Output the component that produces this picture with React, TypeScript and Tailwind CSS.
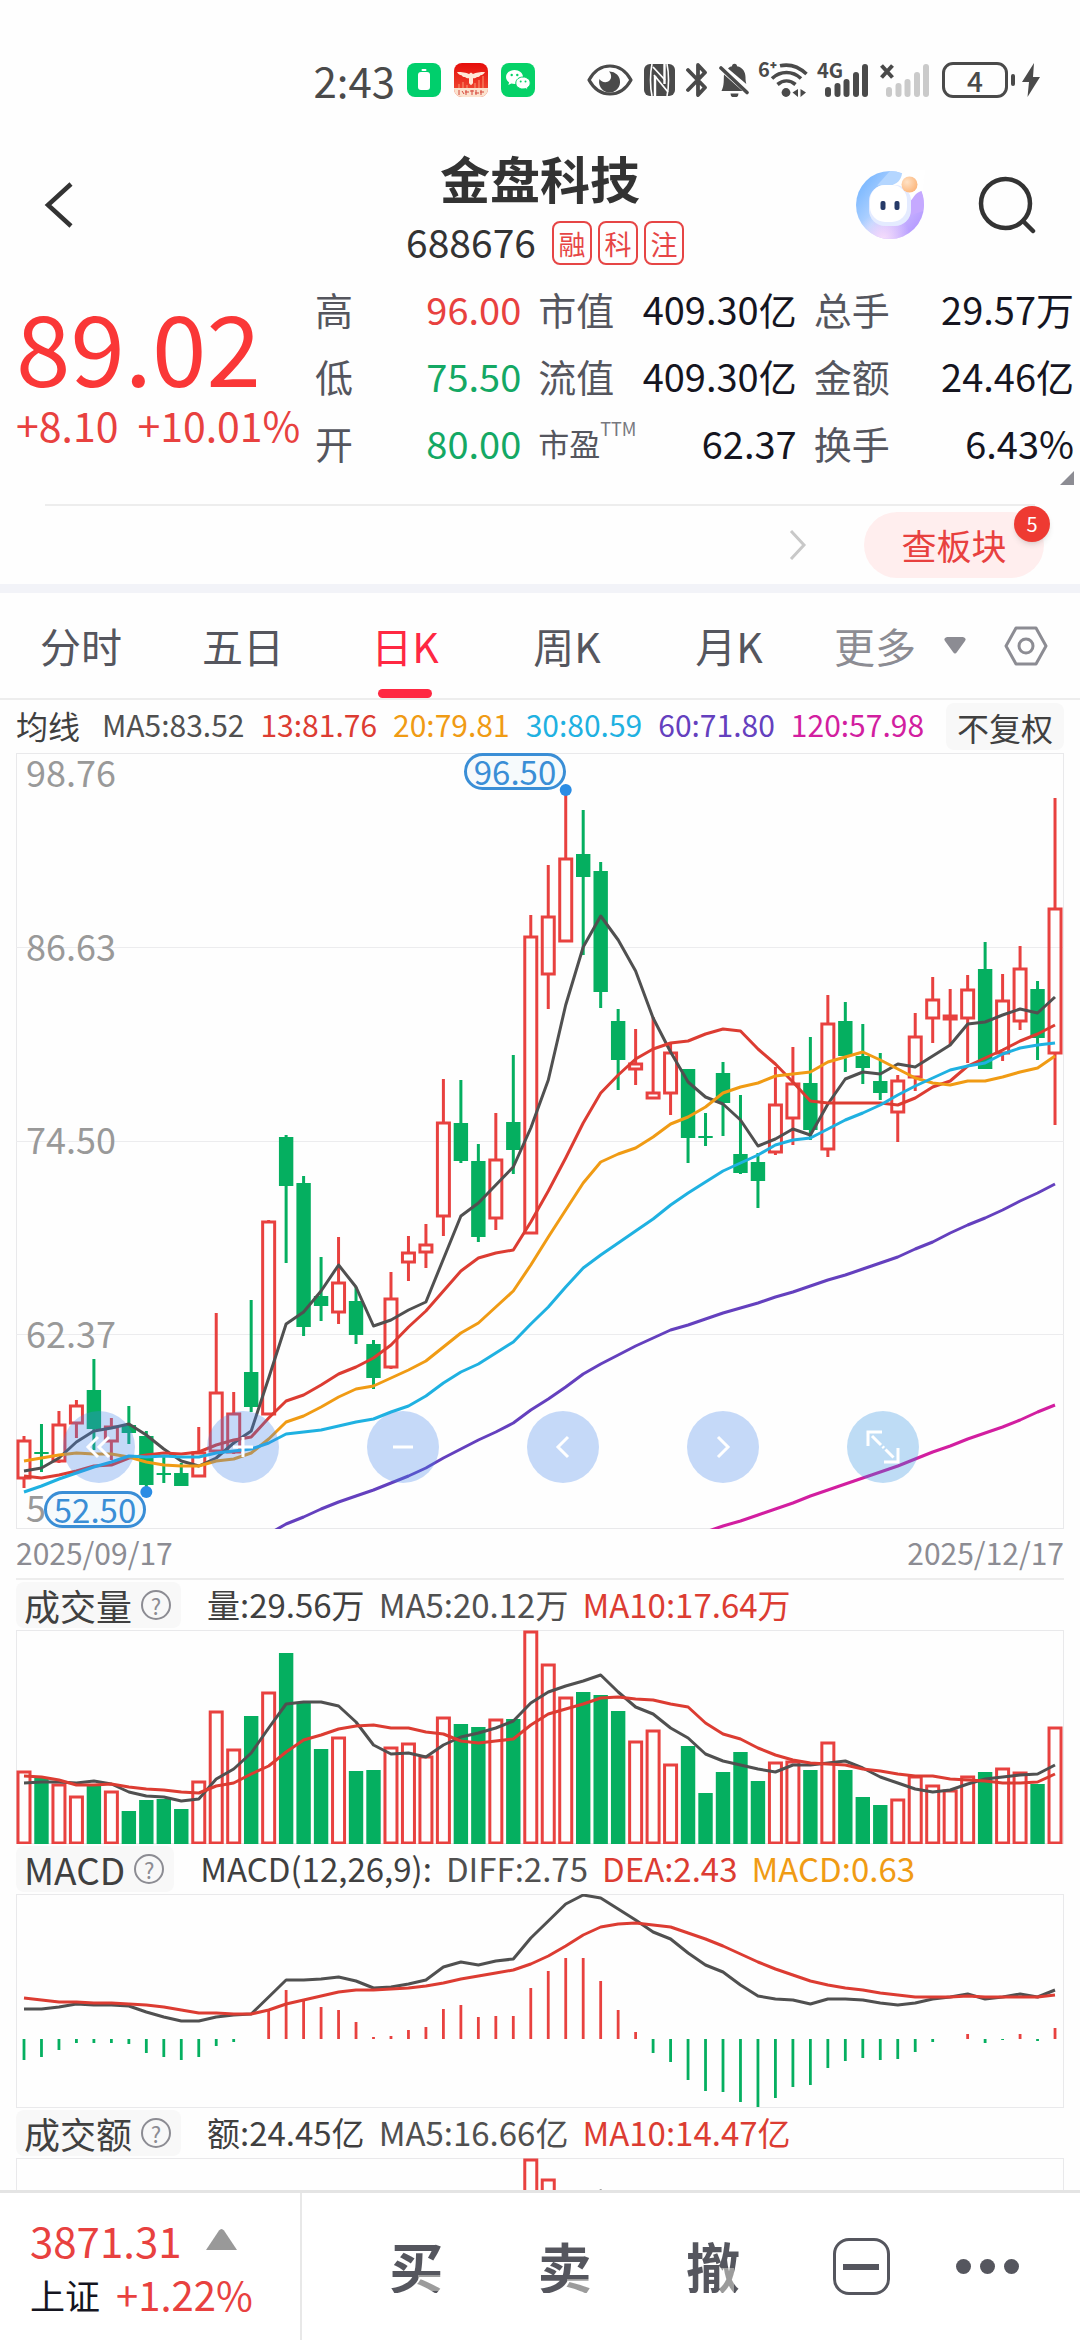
import { useState } from "react";

type Candle = [high: number, top: number, bottom: number, low: number, up: 0 | 1];

// y positions inside the 776px tall price panel
const CANDLES: Candle[] = [
  [683, 687, 726, 735, 1], [671, 699, 701, 719, 0], [658, 671, 709, 710, 1], [647, 652, 671, 685, 1],
  [606, 637, 676, 697, 0], [665, 673, 689, 707, 1], [653, 672, 680, 691, 0], [678, 683, 732, 734, 0],
  [704, 720, 722, 730, 0], [710, 720, 733, 733, 0], [674, 699, 724, 724, 1], [560, 639, 699, 699, 1],
  [639, 660, 700, 701, 1], [547, 619, 654, 659, 0], [467, 468, 662, 662, 1], [382, 384, 433, 510, 0],
  [423, 430, 574, 583, 0], [504, 543, 553, 568, 0], [484, 529, 560, 571, 1], [534, 548, 582, 591, 0],
  [587, 591, 625, 636, 0], [519, 545, 615, 616, 1], [483, 499, 510, 528, 1], [471, 491, 500, 515, 1],
  [326, 369, 464, 483, 1], [327, 370, 408, 410, 0], [391, 408, 484, 489, 0], [360, 406, 466, 477, 1],
  [302, 369, 397, 421, 0], [162, 183, 481, 481, 1], [112, 163, 222, 256, 1], [40, 105, 189, 189, 1],
  [57, 101, 124, 202, 0], [109, 118, 239, 255, 0], [256, 268, 307, 337, 0], [276, 310, 317, 332, 1],
  [264, 339, 346, 346, 1], [291, 299, 341, 362, 1], [316, 316, 385, 410, 0], [360, 383, 385, 393, 0],
  [309, 320, 350, 383, 0], [342, 401, 420, 421, 0], [400, 409, 428, 455, 0], [314, 351, 400, 402, 1],
  [294, 330, 366, 392, 1], [284, 330, 377, 387, 0], [242, 270, 397, 404, 1], [249, 268, 303, 319, 0],
  [271, 303, 315, 331, 0], [300, 328, 340, 347, 0], [322, 327, 360, 389, 1], [260, 283, 325, 338, 1],
  [224, 246, 266, 290, 1], [236, 262, 267, 292, 1], [222, 236, 266, 310, 1], [189, 216, 316, 316, 0],
  [221, 247, 301, 308, 1], [193, 215, 269, 277, 1], [228, 236, 285, 307, 0], [45, 155, 301, 372, 1],
];

const MA5 = [718, 715, 705, 689, 678, 675, 671, 682, 696, 708, 713, 705, 690, 678, 625, 571, 559, 538, 512, 534, 573, 567, 557, 549, 506, 463, 450, 432, 414, 375, 327, 252, 194, 163, 187, 218, 265, 299, 329, 344, 351, 367, 393, 386, 376, 382, 351, 326, 319, 321, 311, 314, 303, 292, 271, 269, 262, 256, 260, 244];
const MA13 = [723, 725, 722, 718, 713, 712, 705, 702, 700, 701, 699, 692, 687, 684, 665, 648, 642, 632, 621, 614, 605, 592, 574, 558, 538, 518, 505, 500, 497, 469, 438, 405, 370, 340, 322, 306, 296, 290, 288, 281, 276, 278, 296, 311, 329, 348, 350, 350, 350, 350, 352, 345, 334, 328, 313, 305, 297, 288, 281, 272];
const MA20 = [708, 705, 702, 700, 701, 701, 704, 709, 712, 713, 713, 708, 706, 700, 686, 669, 663, 654, 644, 636, 633, 625, 617, 608, 594, 580, 570, 554, 538, 512, 484, 457, 430, 409, 401, 395, 384, 371, 364, 354, 340, 334, 330, 323, 321, 319, 309, 304, 299, 307, 316, 325, 330, 332, 328, 328, 324, 319, 315, 303];
const MA30 = [739, 733, 726, 720, 714, 709, 703, 704, 703, 704, 704, 700, 698, 696, 690, 681, 679, 677, 673, 669, 666, 659, 653, 643, 630, 619, 611, 600, 589, 571, 554, 534, 515, 502, 490, 478, 466, 452, 440, 429, 418, 410, 402, 392, 387, 385, 376, 367, 360, 352, 342, 333, 325, 317, 313, 310, 301, 295, 292, 290];
const MA60 = [781, 771, 764, 756, 749, 743, 737, 730, 723, 715, 705, 696, 687, 679, 670, 657, 646, 634, 621, 611, 602, 593, 585, 577, 572, 566, 560, 555, 550, 544, 539, 533, 527, 522, 516, 510, 504, 496, 489, 480, 472, 465, 457, 448, 440, 431];
const MA120 = [779, 773, 768, 762, 756, 750, 743, 737, 731, 725, 719, 713, 706, 699, 693, 686, 680, 674, 667, 659, 652];

const VOLUME = [141, 148, 154, 166, 154, 161, 181, 170, 169, 179, 151, 81, 119, 86, 62, 23, 73, 119, 107, 141, 140, 117, 113, 126, 87, 94, 97, 89, 89, 1, 34, 67, 62, 65, 81, 111, 100, 134, 116, 163, 142, 122, 151, 132, 131, 140, 112, 140, 167, 175, 169, 146, 155, 160, 146, 142, 138, 142, 154, 97];
const VOL_MA5 = [153, 152, 152, 153, 151, 154, 162, 166, 167, 171, 169, 149, 139, 123, 98, 74, 72, 72, 76, 92, 115, 124, 123, 127, 115, 107, 103, 98, 91, 73, 62, 56, 51, 45, 62, 77, 84, 98, 108, 124, 131, 135, 139, 142, 135, 135, 133, 131, 138, 147, 153, 159, 162, 160, 154, 149, 147, 145, 144, 135];
const VOL_MA10 = [146, 147, 150, 155, 155, 154, 157, 159, 160, 162, 163, 156, 153, 144, 136, 122, 110, 105, 99, 96, 95, 98, 98, 102, 104, 111, 113, 111, 109, 95, 84, 79, 74, 68, 67, 69, 70, 74, 77, 93, 104, 109, 118, 125, 130, 133, 134, 135, 139, 141, 144, 146, 146, 149, 150, 151, 153, 153, 152, 144];

const MACD_ZERO = 145;
const MACD_BARS = [166, 163, 156, 149, 149, 149, 150, 159, 163, 166, 163, 152, 148, 145, 117, 96, 106, 113, 116, 128, 143, 142, 136, 133, 115, 111, 123, 122, 122, 94, 77, 64, 64, 87, 116, 138, 159, 168, 186, 197, 198, 208, 213, 204, 193, 191, 174, 167, 164, 166, 165, 158, 148, 145, 140, 149, 146, 140, 147, 134];
const DIFF = [115, 115, 113, 110, 111, 111, 112, 118, 123, 127, 127, 123, 121, 120, 103, 86, 86, 85, 83, 87, 94, 93, 90, 86, 73, 68, 71, 67, 65, 44, 27, 10, 1, 4, 15, 26, 38, 45, 59, 71, 78, 91, 102, 105, 106, 110, 105, 105, 106, 109, 111, 109, 105, 103, 100, 105, 103, 100, 103, 96];
const DEA = [104, 106, 108, 108, 109, 109, 110, 111, 113, 116, 119, 119, 120, 120, 116, 110, 106, 102, 98, 96, 96, 95, 94, 92, 89, 85, 82, 79, 76, 70, 62, 52, 41, 33, 30, 29, 31, 33, 39, 45, 52, 60, 68, 75, 81, 87, 91, 94, 96, 99, 101, 103, 103, 103, 102, 103, 103, 103, 103, 101];

const RED = "#e8413f";
const GREEN = "#05af60";
const GRAY = "#505050";
const DARK_RED = "#dc3c32";

const xAt = (i: number) => 8 + i * 17.475;
const points = (ys: number[], start = 0) => ys.map((y, i) => `${xAt(i + start).toFixed(1)},${y}`).join(" ");

const Line = ({ ys, color, start = 0 }: { ys: number[]; color: string; start?: number }) => (
  <polyline points={points(ys, start)} fill="none" stroke={color} strokeWidth={3} strokeLinejoin="round" />
);

const Frame = ({ height }: { height: number }) => (
  <rect x={0.5} y={0.5} width={1047} height={height - 1} fill="none" stroke="#e9e9eb" />
);

const PriceChart = () => (
  <svg className="block h-[776px] w-full" viewBox="0 0 1048 776" preserveAspectRatio="none">
    <Frame height={776} />
    {[194.5, 388.5, 581.5].map((y) => (
      <line key={y} x1={0} x2={1048} y1={y} y2={y} stroke="#ececee" />
    ))}
    {CANDLES.map(([high, top, bottom, low, up], i) => {
      const x = xAt(i);
      return up ? (
        <g key={i} stroke={RED} strokeWidth={3} fill="none">
          <line x1={x} x2={x} y1={high} y2={top} />
          <rect x={x - 6} y={top + 1} width={12} height={bottom - top - 2} />
          <line x1={x} x2={x} y1={bottom} y2={low} />
        </g>
      ) : (
        <g key={i} fill={GREEN}>
          <rect x={x - 1.5} y={high} width={3} height={low - high} />
          <rect x={x - 7.2} y={top} width={14.4} height={bottom - top} />
        </g>
      );
    })}
    <Line ys={MA5} color={GRAY} />
    <Line ys={MA13} color={DARK_RED} />
    <Line ys={MA20} color="#f09b14" />
    <Line ys={MA30} color="#1fb1e1" />
    <Line ys={MA60} color="#6440be" start={14} />
    <Line ys={MA120} color="#d21ea0" start={39} />
    <circle cx={xAt(31)} cy={37} r={6} fill="#2b8ce4" />
    <circle cx={xAt(7)} cy={739} r={6} fill="#2b8ce4" />
  </svg>
);

const VolumeChart = () => (
  <svg className="block h-[214px] w-full" viewBox="0 0 1048 214" preserveAspectRatio="none">
    <Frame height={214} />
    {VOLUME.map((top, i) =>
      CANDLES[i][4] ? (
        <rect key={i} x={xAt(i) - 6} y={top + 1} width={12} height={212 - top} fill="none" stroke={RED} strokeWidth={3} />
      ) : (
        <rect key={i} x={xAt(i) - 7.2} y={top} width={14.4} height={214 - top} fill={GREEN} />
      )
    )}
    <Line ys={VOL_MA5} color={GRAY} />
    <Line ys={VOL_MA10} color={DARK_RED} />
  </svg>
);

const MacdChart = () => (
  <svg className="block h-[214px] w-full" viewBox="0 0 1048 214" preserveAspectRatio="none">
    <Frame height={214} />
    {MACD_BARS.map((y, i) => (
      <line key={i} x1={xAt(i)} x2={xAt(i)} y1={MACD_ZERO} y2={y} stroke={y < MACD_ZERO ? RED : GREEN} strokeWidth={2.8} />
    ))}
    <Line ys={DIFF} color={GRAY} />
    <Line ys={DEA} color={DARK_RED} />
  </svg>
);

const AmountChart = () => (
  <svg className="block h-[214px] w-full" viewBox="0 0 1048 214" preserveAspectRatio="none">
    <Frame height={214} />
    <rect x={xAt(29) - 6} y={2} width={12} height={211} fill="none" stroke={RED} strokeWidth={3} />
    <rect x={xAt(30) - 6} y={22} width={12} height={191} fill="none" stroke={RED} strokeWidth={3} />
    <line x1={xAt(33) - 1} x2={xAt(33) + 1} y1={32} y2={32} stroke={GRAY} strokeWidth={1} />
  </svg>
);

const BatteryAppIcon = () => (
  <svg className="size-[34px]" viewBox="0 0 34 34">
    <rect width="34" height="34" rx="8" fill="#00cf6c" />
    <rect x="11" y="9" width="12" height="18" rx="3" fill="#fff" />
    <rect x="14.500" y="6" width="5" height="2" rx="1" fill="#fff" />
  </svg>
);

const BrokerAppIcon = () => (
  <svg className="size-[34px]" viewBox="0 0 34 34">
    <defs>
      <linearGradient id="broker" x1="0" y1="0" x2="0" y2="1">
        <stop offset="0" stopColor="#e60d0a" />
        <stop offset="1" stopColor="#f0553a" />
      </linearGradient>
      <clipPath id="brokerClip">
        <rect width="34" height="34" rx="8" />
      </clipPath>
    </defs>
    <g clipPath="url(#brokerClip)">
      <rect width="34" height="34" fill="url(#broker)" />
      <path d="M3 9c5 0 9 .5 12 2l2-1.500 2 1.500c3-1.500 7-2 12-2-1 2-2.500 3-4.500 3.200-.8 1.300-2 1.800-3.500 1.800-1 1-2.500 1.500-4 1.300v5l-2 2-2-2v-5c-1.500.2-3-.3-4-1.300-1.500 0-2.700-.5-3.500-1.800C5.500 12 4 11 3 9z" fill="#ffe9d8" />
      <path d="M5 25v-4M9 25v-6M13 25v-3M21 25v-5M25 25v-8M29 25V13" stroke="#f98a68" strokeWidth="1.200" />
      <rect y="25" width="34" height="9" fill="#fbe3cf" />
      <path d="M5 27v5M8 28l2 3M12 27v5M11 29h4M18 27v5M16 28h4M22 27v5M21 30h4M27 27v5M26 29h4" stroke="#d5463a" strokeWidth="1" />
    </g>
  </svg>
);

const WechatIcon = () => (
  <svg className="size-[34px]" viewBox="0 0 34 34">
    <rect width="34" height="34" rx="8" fill="#05d268" />
    <path d="M13.500 7C8.800 7 5 10.100 5 14c0 2.200 1.200 4.100 3.100 5.400L7.300 22l3-1.500c1 .3 2.100.5 3.200.5 4.700 0 8.500-3.100 8.500-7s-3.800-7-8.500-7z" fill="#fff" />
    <path d="M22 14c-4 0-7.200 2.600-7.200 6s3.200 6 7.200 6c.9 0 1.800-.2 2.600-.4l2.500 1.300-.7-2.200c1.700-1.100 2.800-2.800 2.800-4.700 0-3.400-3.200-6-7.200-6z" fill="#fff" stroke="#05d268" strokeWidth="1" />
    <g fill="#05d268">
      <circle cx="10.700" cy="12" r="1.200" />
      <circle cx="16.300" cy="12" r="1.200" />
      <circle cx="19.700" cy="18.500" r="1" />
      <circle cx="24.500" cy="18.500" r="1" />
    </g>
  </svg>
);

const EyeIcon = () => (
  <svg className="h-8 w-[46px]" viewBox="0 0 46 32" fill="none">
    <path d="M2 16C7 7 14.500 2 23 2s16 5 21 14c-5 9-12.500 14-21 14S7 25 2 16z" stroke="#4a4a4a" strokeWidth="3.200" strokeLinejoin="round" />
    <path d="M22 7.500A10.500 10.500 0 1 1 12.500 15c1.500 3 7 4.500 10 1.500 2.500-2.500 2-6.500-.5-9z" fill="#4a4a4a" />
  </svg>
);

const NfcIcon = () => (
  <svg className="h-8 w-[31px]" viewBox="0 0 31 32">
    <rect width="31" height="32" rx="6" fill="#4a4a4a" />
    <path d="M8 0c-2 9-2 23 0 32" stroke="#fff" strokeWidth="1.600" fill="none" />
    <path d="M23 0c2 9 2 23 0 32" stroke="#fff" strokeWidth="1.600" fill="none" />
    <path d="M11 12v20M20.500 0v20" stroke="#fff" strokeWidth="2.400" />
    <path d="M9 3l12 13M10 11l14 17" stroke="#fff" strokeWidth="1.800" />
  </svg>
);

const BluetoothIcon = () => (
  <svg className="h-[34px] w-[22px]" viewBox="0 0 22 34" fill="none" stroke="#4a4a4a" strokeWidth="3.800" strokeLinejoin="round" strokeLinecap="round">
    <path d="M2 7l17 17.500-7 7.500V2l7 7.500L2 27" />
  </svg>
);

const BellOffIcon = () => (
  <svg className="h-[34px] w-[30px]" viewBox="0 0 30 34" fill="#4a4a4a">
    <path d="M2.500 28h21L5 11.500C4.500 17 5.500 22 2.500 28zM9 5.500c1.500-1.500 3-2 4-2.200a2.500 2.500 0 0 1 5 0c6 1.200 8.500 6 8.500 11 0 2.500.2 4.500.8 6.700z" />
    <path d="M11.500 30.500h8a4 4 0 0 1-8 0z" />
    <path d="M2 5l26 24.500" stroke="#4a4a4a" strokeWidth="3.600" strokeLinecap="round" />
  </svg>
);

const WifiIcon = () => (
  <div className="relative">
    <svg className="h-[36px] w-[48px]" viewBox="0 0 48 36" fill="none" stroke="#4a4a4a" strokeWidth="3.600">
      <path d="M20 3.800C30 1.500 39 5 46.500 12M12 16.500c8.500-8 20.500-8 29 0M17.500 22.500c5.500-4.600 12.500-4.600 18 0" />
      <circle cx="26" cy="30.500" r="4.400" fill="#4a4a4a" stroke="none" />
      <path d="M38 27v8l-5.500-4.500zM40.500 27v8l5.500-4.500z" fill="#4a4a4a" stroke="none" />
    </svg>
    <span className="absolute -top-1 -left-0.5 text-[20px] leading-[22px] font-bold text-[#4a4a4a]">6⁺</span>
  </div>
);

const SignalIcon = ({ label, faded }: { label?: string; faded?: boolean }) => (
  <div className="relative">
    <svg className="h-[36px] w-[50px]" viewBox="0 0 50 36" fill={faded ? "#cacaca" : "#4a4a4a"}>
      <rect x="6" y="25" width="6" height="10" rx="3" />
      <rect x="15.500" y="21" width="6" height="14" rx="3" />
      <rect x="24.500" y="17" width="6" height="18" rx="3" />
      <rect x="34" y="10" width="6" height="25" rx="3" />
      <rect x="43" y="2" width="6" height="33" rx="3" />
      {faded && <path d="M1.500 3.500l11 12M12.500 3.500l-11 12" stroke="#4a4a4a" strokeWidth="4" />}
    </svg>
    {label && <span className="absolute -top-1 -left-0.5 text-[20px] leading-[24px] font-bold text-[#4a4a4a]">{label}</span>}
  </div>
);

const StatusBar = () => (
  <div className="flex h-[98px] items-end justify-end pr-10">
    <div className="flex h-9 items-center">
      <span className="mr-3 text-[42px] leading-9 text-[#4a4a4a]">2:43</span>
      <div className="flex gap-[13px]">
        <BatteryAppIcon />
        <BrokerAppIcon />
        <WechatIcon />
      </div>
      <div className="ml-[52px] flex items-center gap-[11px]">
        <EyeIcon />
        <NfcIcon />
        <BluetoothIcon />
        <BellOffIcon />
        <WifiIcon />
        <SignalIcon label="4G" />
        <SignalIcon faded />
      </div>
      <div className="ml-3 flex h-[36px] w-[66px] items-center justify-center rounded-[11px] border-[3px] border-[#4a4a4a] text-[28px] leading-none font-medium text-[#4a4a4a]">
        4
      </div>
      <div className="ml-[3px] h-3 w-1 rounded-sm bg-[#4a4a4a]" />
      <svg className="ml-[7px] h-[34px] w-[18px]" viewBox="0 0 18 34" fill="#4a4a4a">
        <path d="M12 0L0 19h7L5.500 34 18 14h-7z" />
      </svg>
    </div>
  </div>
);

const RobotIcon = () => (
  <svg className="size-[70px]" viewBox="0 0 70 70">
    <defs>
      <linearGradient id="ring" x1="0.1" y1="0.2" x2="0.9" y2="0.8">
        <stop offset="0" stopColor="#7fbaff" />
        <stop offset="0.45" stopColor="#b9d6ff" />
        <stop offset="0.65" stopColor="#cdbcff" />
        <stop offset="1" stopColor="#b79dff" />
      </linearGradient>
      <radialGradient id="blush" cx="0.4" cy="1" r="0.4">
        <stop offset="0" stopColor="#f6ddfb" />
        <stop offset="1" stopColor="#f6ddfb" stopOpacity="0" />
      </radialGradient>
      <radialGradient id="ball" cx="0.35" cy="0.35" r="0.8">
        <stop offset="0" stopColor="#ffe2c6" />
        <stop offset="1" stopColor="#fcb071" />
      </radialGradient>
    </defs>
    <circle cx="35" cy="35" r="34" fill="url(#ring)" />
    <circle cx="35" cy="35" r="34" fill="url(#blush)" />
    <path d="M50 0L36 16l18 18 14-15L70 0z" fill="#fff" />
    <path d="M35 1c4.500 0 8 .8 12 2.500-1 7-5 10-11 12H22z" fill="#b4d6ff" />
    <path d="M66.500 21c2.500 6 3 13 1.500 20L54 46V32c4-2 5-9 12.500-11z" fill="#c5a9ff" />
    <rect x="14" y="15" width="42" height="41" rx="16" fill="#e4ebff" />
    <rect x="15" y="15" width="37" height="37" rx="15" fill="#fff" />
    <rect x="25.500" y="31" width="5" height="9" rx="2" fill="#263a68" />
    <rect x="39.500" y="31" width="5" height="9" rx="2" fill="#263a68" />
    <circle cx="54.500" cy="14.500" r="8" fill="url(#ball)" />
  </svg>
);

const Header = () => (
  <header className="mt-[43px] flex items-center justify-between pr-[44px] pl-[44px]">
    <div className="flex-1 pt-1">
      <button type="button" aria-label="返回" className="block">
        <svg className="h-[46px] w-[30px]" viewBox="0 0 30 46" fill="none" stroke="#333" strokeWidth="4.500">
          <path d="M27 2L4 23l23 21" />
        </svg>
      </button>
    </div>
    <div className="flex flex-col items-center">
      <h1 className="text-[50px] leading-[72px] font-bold text-[#333]">金盘科技</h1>
      <div className="mt-2 ml-[10px] flex items-center gap-1.5">
        <span className="mr-2.5 pb-1 text-[39px] leading-[40px] text-[#333]">688676</span>
        {["融", "科", "注"].map((tag) => (
          <span key={tag} className="flex h-[44px] w-10 items-center justify-center rounded-lg border-2 border-[#e64545] text-[27px] leading-none text-[#e64545]">
            {tag}
          </span>
        ))}
      </div>
    </div>
    <div className="flex flex-1 items-center justify-end gap-[53px] pt-1">
      <button type="button" aria-label="助手">
        <RobotIcon />
      </button>
      <button type="button" aria-label="搜索">
        <svg className="size-[58px]" viewBox="0 0 58 58" fill="none" stroke="#333" strokeWidth="4.500" strokeLinecap="round">
          <circle cx="27.500" cy="27.500" r="24.500" />
          <path d="M45 45l10 10" />
        </svg>
      </button>
    </div>
  </header>
);

const Stat = ({ label, value, color = "text-[#15151f]", sup }: { label: string; value: string; color?: string; sup?: string }) => (
  <div className="flex h-[67px] items-center justify-between whitespace-nowrap">
    <dt className={sup ? "flex text-[31px] text-[#55565e]" : "text-[38px] text-[#55565e]"}>
      {label}
      {sup && <sup className="top-0 self-start pt-1 text-[18px] leading-none text-[#77787f]">{sup}</sup>}
    </dt>
    <dd className={`text-[38px] ${color}`}>{value}</dd>
  </div>
);

const Quote = () => (
  <section className="relative mt-[10px] flex pr-[6px] pl-4">
    <div className="w-[299px] pt-[19px] whitespace-nowrap">
      <div className="text-[98px] leading-[100px] text-[#fa3737]">89.02</div>
      <div className="flex gap-[19px] text-[41px] leading-[60px] text-[#e8413f]">
        <span>+8.10</span>
        <span>+10.01%</span>
      </div>
    </div>
    <dl className="grid flex-1 grid-cols-[206fr_258fr_260fr] gap-x-[17px] leading-[56px]">
      <Stat label="高" value="96.00" color="text-[#e8413f]" />
      <Stat label="市值" value="409.30亿" />
      <Stat label="总手" value="29.57万" />
      <Stat label="低" value="75.50" color="text-[#14a864]" />
      <Stat label="流值" value="409.30亿" />
      <Stat label="金额" value="24.46亿" />
      <Stat label="开" value="80.00" color="text-[#14a864]" />
      <Stat label="市盈" value="62.37" sup="TTM" />
      <Stat label="换手" value="6.43%" />
    </dl>
    <svg className="absolute right-[6px] -bottom-[9px] size-[14px]" viewBox="0 0 14 14" fill="#8c8c93">
      <path d="M14 0v14H0z" />
    </svg>
  </section>
);

const SectorBar = () => (
  <div className="mt-7 border-b-[9px] border-[#f2f3f8]">
    <div className="mx-[45px] h-0.5 bg-[#ededed]" />
    <div className="flex h-[78px] items-center justify-end pr-9">
      <svg className="mr-[57px] h-[30px] w-[18px]" viewBox="0 0 18 30" fill="none" stroke="#c8c8c8" strokeWidth="3">
        <path d="M2 1l13 14L2 29" />
      </svg>
      <button type="button" className="relative h-[66px] w-[180px] rounded-full bg-[#ffeeee] text-[35px] text-[#e8413f]">
        查板块
        <span className="absolute -top-[6px] -right-[6px] flex size-9 items-center justify-center rounded-full bg-[#ee3a32] text-[20px] leading-none text-white shadow-md">
          5
        </span>
      </button>
    </div>
  </div>
);

const PERIODS = ["分时", "五日", "日K", "周K", "月K"];

const PeriodTabs = () => {
  const [active, setActive] = useState("日K");
  return (
    <nav className="grid h-[107px] grid-cols-[162fr_162fr_162fr_162fr_162fr_270fr] border-b-2 border-[#ededed]">
      {PERIODS.map((p) => (
        <button
          key={p}
          type="button"
          onClick={() => setActive(p)}
          className={`relative text-[41px] ${p === active ? "text-[#ff2842]" : "text-[#55565e]"}`}
        >
          {p}
          {p === active && <span className="absolute bottom-0 left-1/2 h-[9px] w-[54px] -translate-x-1/2 rounded-full bg-[#ff2842]" />}
        </button>
      ))}
      <div className="flex items-center justify-between pr-8 pl-6">
        <button type="button" className="flex items-center gap-7 text-[41px] text-[#8c8c93]">
          更多
          <svg className="h-[17px] w-[22px]" viewBox="0 0 22 17" fill="#8c8c93">
            <path d="M3 0h16q4 1 2 4l-8 11q-2 3-4 0L1 4q-2-3 2-4z" />
          </svg>
        </button>
        <button type="button" aria-label="设置">
          <svg className="h-[40px] w-[44px]" viewBox="0 0 44 40" fill="none" stroke="#8c8c93" strokeWidth="3">
            <path d="M12 2h20l10 18-10 18H12L2 20z" strokeLinejoin="round" />
            <circle cx="22" cy="20" r="7" />
          </svg>
        </button>
      </div>
    </nav>
  );
};

const MaLegend = () => (
  <div className="flex h-[53px] items-center justify-between pr-4 pl-4 whitespace-nowrap text-[30px] text-[#505050]">
    <span className="pb-1 text-[32px] text-[#404040]">均线</span>
    <div className="flex gap-4 pb-1">
      <span>MA5:83.52</span>
      <span className="text-[#dc3c32]">13:81.76</span>
      <span className="text-[#f09b14]">20:79.81</span>
      <span className="text-[#1fb1e1]">30:80.59</span>
      <span className="text-[#6440be]">60:71.80</span>
      <span className="text-[#d21ea0]">120:57.98</span>
    </div>
    <button type="button" className="h-[47px] rounded-lg bg-[#f8f8f8] px-[11px] text-[32px] leading-none text-[#404040]">
      不复权
    </button>
  </div>
);

const RoundButton = ({ label, d, className = "bg-[#4286eb]/30" }: { label: string; d: string; className?: string }) => (
  <button type="button" aria-label={label} className={`flex size-[72px] items-center justify-center rounded-full ${className}`}>
    <svg className="size-9" viewBox="0 0 36 36" fill="none" stroke="#fff" strokeWidth="3">
      <path d={d} />
    </svg>
  </button>
);

const Bubble = ({ children, className }: { children: React.ReactNode; className: string }) => (
  <span className={`absolute flex h-[37px] w-[102px] items-center justify-center rounded-full border-[3px] border-[#3a8ed6] bg-[#f6fafc] text-[33px] leading-none text-[#3a8ed6] ${className}`}>
    {children}
  </span>
);

const AXIS = "absolute left-[10px] text-[36px] leading-[36px] text-[#999]";

const PricePanel = () => (
  <div className="mx-4">
    <div className="relative">
      <span className={`${AXIS} top-0`}>98.76</span>
      <span className={`${AXIS} top-[174px]`}>86.63</span>
      <span className={`${AXIS} top-[367px]`}>74.50</span>
      <span className={`${AXIS} top-[561px]`}>62.37</span>
      <span className={`${AXIS} top-[735px]`}>5</span>
      <PriceChart />
      <Bubble className="top-0 left-[448px]">96.50</Bubble>
      <Bubble className="top-[738px] left-[28px]">52.50</Bubble>
      <div className="absolute top-[658px] left-[47px] flex gap-[88px]">
        <div className="flex gap-[72px]">
          <RoundButton label="最早" d="M17 8L7 18l10 10M28 8L18 18l10 10" />
          <RoundButton label="放大" d="M18 8v20M8 18h20" />
        </div>
        <RoundButton label="缩小" d="M8 18h20" />
        <RoundButton label="向左" d="M23 8L13 18l10 10" />
        <RoundButton label="向右" d="M13 8l10 10-10 10" />
        <RoundButton label="全屏" className="bg-[#2b90e0]/30" d="M3 17V3h14M33 19v14H19M7 7l9 9M17.500 17.500l1.500 1.500M20.500 20.500l8 8" />
      </div>
    </div>
    <div className="flex h-[50px] items-center justify-between pb-1 text-[30px] text-[#8c8c93]">
      <span>2025/09/17</span>
      <span>2025/12/17</span>
    </div>
  </div>
);

const IndicatorHeader = ({ name, values, size = "text-[36px]" }: { name: string; values: [string, string][]; size?: string }) => (
  <div className="flex h-[50px] items-center gap-[26px] whitespace-nowrap">
    <button type="button" className={`flex h-[46px] items-center gap-[9px] rounded-lg bg-[#f8f8f8] pr-[10px] pl-2 leading-none text-[#404040] ${size}`}>
      {name}
      <span className="flex size-[30px] items-center justify-center rounded-full border-2 border-[#8c8c93] text-[22px] leading-none text-[#8c8c93]">?</span>
    </button>
    <div className="flex gap-[14px] text-[33px]">
      {values.map(([text, color]) => (
        <span key={text} className={color}>
          {text}
        </span>
      ))}
    </div>
  </div>
);

const DOTS = [0, 1, 2];

const TradeButton = ({ children, className }: { children: string; className: string }) => (
  <button type="button">
    <span className={`inline-block bg-[#55565e] bg-[linear-gradient(#9c9c9c,#9c9c9c)] bg-clip-text bg-no-repeat text-[54px] leading-[54px] font-bold text-transparent ${className}`}>
      {children}
    </span>
  </button>
);

const BottomBar = () => (
  <footer className="flex h-[150px] shrink-0 border-t-[3px] border-[#e4e4e4] bg-white">
    <a href="#index" className="flex w-[302px] flex-col justify-center border-r-2 border-[#e8e8e8] pl-[30px] leading-[55px] text-[#e8413f]">
      <span className="flex items-center gap-6 text-[42px]">
        3871.31
        <svg className="h-[21px] w-[31px]" viewBox="0 0 31 21" fill="#999">
          <path d="M13 1.500q2.500-3 5 0L31 21H0z" />
        </svg>
      </span>
      <span className="flex items-center gap-4 text-[40px]">
        <span className="text-[35px] text-[#15151f]">上证</span>
        +1.22%
      </span>
    </a>
    <div className="grid flex-1 grid-cols-[148fr_148fr_148fr_148fr_104fr] items-center px-10">
      <TradeButton className="bg-[length:46%_30%] bg-[position:100%_94%]">买</TradeButton>
      <TradeButton className="bg-[length:46%_26%] bg-[position:100%_100%]">卖</TradeButton>
      <TradeButton className="bg-[length:26%_46%] bg-[position:86%_100%]">撤</TradeButton>
      <button type="button" aria-label="收起" className="flex justify-center">
        <span className="flex size-[57px] items-center justify-center rounded-2xl border-[3px] border-[#55565e]">
          <span className="h-[6px] w-9 bg-[#55565e]" />
        </span>
      </button>
      <button type="button" aria-label="更多" className="flex justify-center gap-[9px]">
        {DOTS.map((d) => (
          <span key={d} className="size-[15px] rounded-full bg-[#55565e]" />
        ))}
      </button>
    </div>
  </footer>
);

export default function App() {
  return (
    <div className="flex h-screen flex-col bg-[#fefefe] font-['Noto_Sans_CJK_SC',sans-serif]">
      <main className="min-h-0 flex-1 overflow-hidden">
        <StatusBar />
        <Header />
        <Quote />
        <SectorBar />
        <PeriodTabs />
        <MaLegend />
        <PricePanel />
        <div className="mx-4">
          <div className="-mt-px h-0.5 bg-[#ededed]" />
          <IndicatorHeader
            name="成交量"
            values={[["量:29.56万", "text-[#404040]"], ["MA5:20.12万", "text-[#505050]"], ["MA10:17.64万", "text-[#dc3c32]"]]}
          />
          <VolumeChart />
          <IndicatorHeader
            name="MACD"
            size="text-[37px]"
            values={[["MACD(12,26,9):", "text-[#404040]"], ["DIFF:2.75", "text-[#505050]"], ["DEA:2.43", "text-[#dc3c32]"], ["MACD:0.63", "text-[#f09b14]"]]}
          />
          <MacdChart />
          <IndicatorHeader
            name="成交额"
            values={[["额:24.45亿", "text-[#404040]"], ["MA5:16.66亿", "text-[#505050]"], ["MA10:14.47亿", "text-[#dc3c32]"]]}
          />
          <AmountChart />
        </div>
      </main>
      <BottomBar />
    </div>
  );
}
